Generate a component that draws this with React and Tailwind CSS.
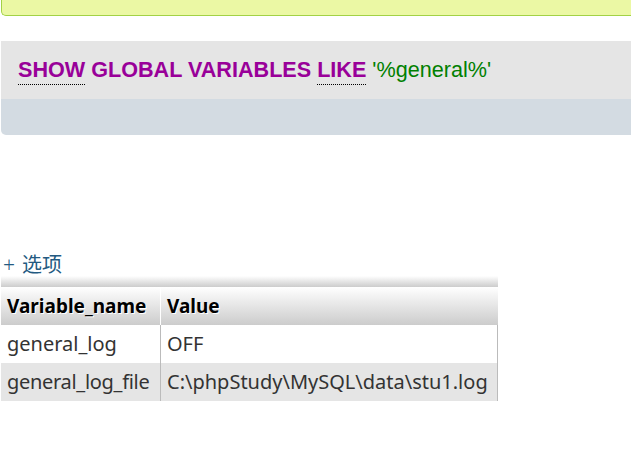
export default function App() {
  return (
    <div className="w-[631px] h-[449px] bg-white overflow-hidden relative" style={{ fontFamily: '"Liberation Sans", Arial, sans-serif' }}>
      <div className="ml-[1px] h-[16px] bg-[#ebf8a4] border border-t-0 border-r-0 border-[#a2d246] rounded-bl-[5px]" />
      <div className="ml-[1px] mt-[25px] rounded-bl-[5px] overflow-hidden">
        <div className="h-[58px] bg-[#e5e5e5] pl-[17px] flex items-center">
          <div className="text-[21.6px] leading-none whitespace-nowrap">
            <span className="font-bold text-[#990099] border-b border-dotted border-black pb-[2px]">SHOW</span>
            <span className="font-bold text-[#990099]"> GLOBAL VARIABLES </span>
            <span className="font-bold text-[#990099] border-b border-dotted border-black pb-[2px]">LIKE</span>
            <span className="text-[#008000]"> '%general%'</span>
          </div>
        </div>
        <div className="h-[36px] bg-[#d3dbe2]" />
      </div>
      <div className="mt-[119px] pl-[3px] flex items-center h-[22px] text-[#235a81]" style={{ fontFamily: '"Noto Sans", "Noto Sans CJK SC", sans-serif' }}>
        <span className="text-[21px] leading-none font-light">+</span>
        <span className="ml-[7px] text-[20px] leading-none">选项</span>
      </div>
      <div className="ml-[1px] w-[497px]" style={{ fontFamily: '"Noto Sans", "Open Sans", sans-serif' }}>
        <div className="h-[11px] bg-gradient-to-b from-[#ffffff] to-[#cccccc]" />
        <div className="flex h-[38px] bg-gradient-to-b from-[#ffffff] to-[#cccccc] text-[19px] font-bold text-black items-center [text-shadow:1px_1px_0_#fff]">
          <div className="w-[160px] h-full flex items-center pl-[6px] border-r border-[#ffffff]">Variable_name</div>
          <div className="flex-1 pl-[6px]">Value</div>
        </div>
        <div className="flex h-[38px] bg-white text-[20px] text-[#333] items-center border-r border-[#bbbbbb]">
          <div className="w-[160px] h-full flex items-center pl-[6px] border-r border-[#bbbbbb]">general_log</div>
          <div className="flex-1 pl-[6px]">OFF</div>
        </div>
        <div className="flex h-[38px] bg-[#e5e5e5] text-[20px] text-[#333] items-center border-r border-[#bbbbbb]">
          <div className="w-[160px] h-full flex items-center pl-[6px] border-r border-[#bbbbbb] whitespace-nowrap tracking-[-0.3px]">general_log_file</div>
          <div className="flex-1 pl-[6px] whitespace-nowrap">C:\phpStudy\MySQL\data\stu1.log</div>
        </div>
      </div>
    </div>
  );
}
